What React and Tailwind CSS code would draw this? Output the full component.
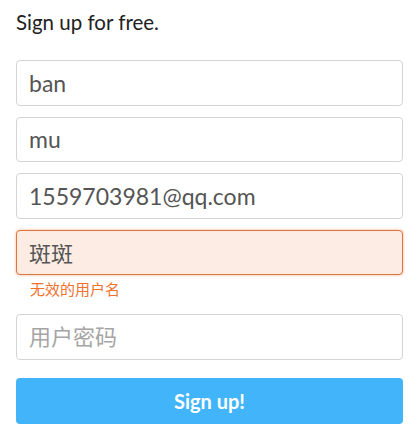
import React from 'react';

const font = { fontFamily: 'Lato, "Noto Sans CJK SC", sans-serif' };

const Field = ({ value, placeholder, error, cjk }) => {
  const size = cjk ? 'text-[22px]' : 'text-[23px]';
  return (
    <input
      readOnly
      defaultValue={value}
      placeholder={placeholder}
      className={
        error
          ? `block w-full h-[45.5px] rounded-[4px] border border-[#d9773f] bg-[#fdece3] px-[12px] ${size} text-[#555] shadow-[0_0_3px_rgba(240,120,60,0.6)] outline-none`
          : `block w-full h-[45.5px] rounded-[4px] border border-[#d4d4d4] bg-white px-[12px] ${size} text-[#555] placeholder:text-[#a5a5a5] outline-none`
      }
      style={font}
    />
  );
};

export default function App() {
  return (
    <div className="bg-white w-[419px] h-[439px] px-[16px] pt-[9px]" style={font}>
      <h2 className="text-[20.5px] leading-[26px] text-[#222]">Sign up for free.</h2>
      <div className="mt-[25px] flex flex-col gap-[11px]">
        <Field value="ban" />
        <Field value="mu" />
        <Field value="1559703981@qq.com" />
        <div>
          <Field value="斑斑" error cjk />
          <p className="mt-[5px] pl-[14px] text-[15px] leading-[19px] text-[#f0722e]">无效的用户名</p>
        </div>
      </div>
      <div className="mt-[15px]">
        <Field placeholder="用户密码" cjk />
      </div>
      <button className="mt-[18.5px] w-full h-[46px] rounded-[4px] bg-[#42b5fa] text-white text-[20px] font-bold">
        Sign up!
      </button>
    </div>
  );
}
